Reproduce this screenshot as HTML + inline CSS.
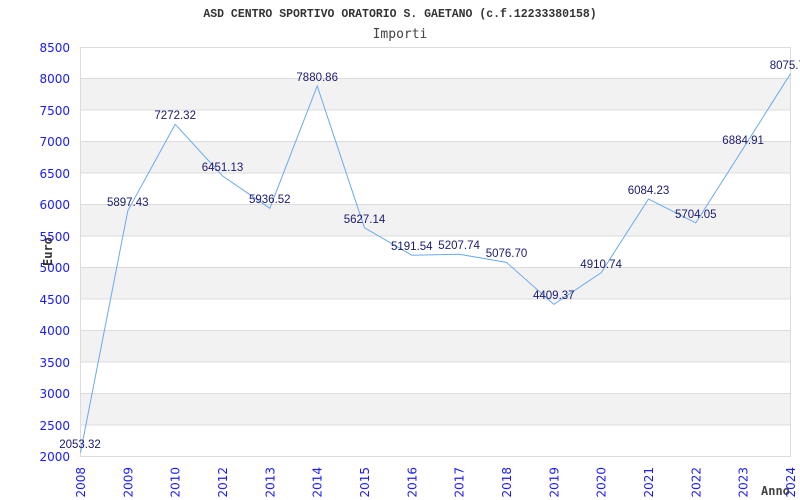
<!DOCTYPE html>
<html><head><meta charset="utf-8"><style>html,body{margin:0;padding:0;background:#fff}svg{display:block}</style></head>
<body>
<svg width="800" height="500" xmlns="http://www.w3.org/2000/svg">
<rect width="800" height="500" fill="#fff"/>
<g fill="#f2f2f2">
<rect x="80.5" y="78.5" width="710" height="31.5"/>
<rect x="80.5" y="141.5" width="710" height="31.5"/>
<rect x="80.5" y="204.5" width="710" height="31.5"/>
<rect x="80.5" y="267.5" width="710" height="31.5"/>
<rect x="80.5" y="330.5" width="710" height="31.5"/>
<rect x="80.5" y="393.5" width="710" height="31.5"/>
</g>
<g stroke="#dcdcdc" stroke-width="1">
<line x1="80" y1="78.5" x2="790" y2="78.5"/><line x1="80" y1="110" x2="790" y2="110"/>
<line x1="80" y1="141.5" x2="790" y2="141.5"/><line x1="80" y1="173" x2="790" y2="173"/>
<line x1="80" y1="204.5" x2="790" y2="204.5"/><line x1="80" y1="236" x2="790" y2="236"/>
<line x1="80" y1="267.5" x2="790" y2="267.5"/><line x1="80" y1="299" x2="790" y2="299"/>
<line x1="80" y1="330.5" x2="790" y2="330.5"/><line x1="80" y1="362" x2="790" y2="362"/>
<line x1="80" y1="393.5" x2="790" y2="393.5"/><line x1="80" y1="425" x2="790" y2="425"/>
<rect x="80.5" y="47.5" width="710" height="409" fill="none"/>
</g>
<text x="400" y="17" text-anchor="middle" font-family="Liberation Mono, monospace" font-weight="bold" font-size="11.5" fill="#333">ASD CENTRO SPORTIVO ORATORIO S. GAETANO (c.f.12233380158)</text>
<text x="400" y="38" text-anchor="middle" font-family="DejaVu Sans Mono, monospace" font-size="13" fill="#444">Importi</text>
<g font-family="DejaVu Sans, sans-serif" font-size="12" fill="#1a1aff" text-anchor="end">
<text x="70" y="52">8500</text><text x="70" y="83">8000</text><text x="70" y="115">7500</text>
<text x="70" y="146">7000</text><text x="70" y="178">6500</text><text x="70" y="209">6000</text>
<text x="70" y="241">5500</text><text x="70" y="272">5000</text><text x="70" y="304">4500</text>
<text x="70" y="335">4000</text><text x="70" y="367">3500</text><text x="70" y="398">3000</text>
<text x="70" y="430">2500</text><text x="70" y="461">2000</text>
</g>
<g font-family="DejaVu Sans, sans-serif" font-size="12" fill="#1a1aff" text-anchor="end">
<text transform="translate(85,467) rotate(-90)">2008</text>
<text transform="translate(132.3,467) rotate(-90)">2009</text>
<text transform="translate(179.7,467) rotate(-90)">2010</text>
<text transform="translate(227,467) rotate(-90)">2012</text>
<text transform="translate(274.3,467) rotate(-90)">2013</text>
<text transform="translate(321.7,467) rotate(-90)">2014</text>
<text transform="translate(369,467) rotate(-90)">2015</text>
<text transform="translate(416.3,467) rotate(-90)">2016</text>
<text transform="translate(463.6,467) rotate(-90)">2017</text>
<text transform="translate(511,467) rotate(-90)">2018</text>
<text transform="translate(558.3,467) rotate(-90)">2019</text>
<text transform="translate(605.6,467) rotate(-90)">2020</text>
<text transform="translate(653,467) rotate(-90)">2021</text>
<text transform="translate(700.3,467) rotate(-90)">2022</text>
<text transform="translate(747.6,467) rotate(-90)">2023</text>
<text transform="translate(795,467) rotate(-90)">2024</text>
</g>
<text transform="translate(52,266) rotate(-90)" font-family="DejaVu Sans Mono, monospace" font-weight="bold" font-size="12" fill="#333">Euro</text>
<text x="761" y="495" font-family="DejaVu Sans Mono, monospace" font-weight="bold" font-size="12" fill="#444">Anno</text>
<polyline fill="none" stroke="#6aaaf0" stroke-width="1" points="80.5,452.6 127.8,210.8 175.2,124.3 222.5,175.9 269.8,208.3 317.2,86 364.5,227.8 411.8,255.2 459.1,254.2 506.5,262.4 553.8,304.4 601.1,272.8 648.5,199 695.8,222.9 743.1,148.6 790.5,73.7"/>
<g font-family="Liberation Sans, sans-serif" font-size="11.5" fill="#1a1a70" text-anchor="middle">
<text x="80" y="448">2053.32</text>
<text x="127.8" y="206">5897.43</text>
<text x="175.2" y="119">7272.32</text>
<text x="222.5" y="171">6451.13</text>
<text x="269.8" y="203">5936.52</text>
<text x="317.2" y="81">7880.86</text>
<text x="364.5" y="223">5627.14</text>
<text x="411.8" y="250">5191.54</text>
<text x="459.1" y="249">5207.74</text>
<text x="506.5" y="257">5076.70</text>
<text x="553.8" y="299">4409.37</text>
<text x="601.1" y="268">4910.74</text>
<text x="648.5" y="194">6084.23</text>
<text x="695.8" y="218">5704.05</text>
<text x="743.1" y="144">6884.91</text>
<text x="790.5" y="69">8075.71</text>
</g>
</svg>
</body></html>
